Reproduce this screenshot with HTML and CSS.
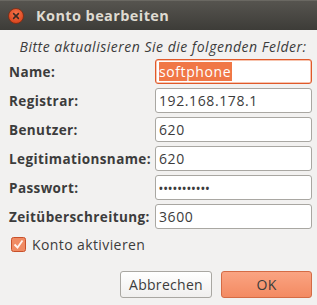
FILE: index.html
```html
<!DOCTYPE html>
<html>
<head>
<meta charset="utf-8">
<link rel="stylesheet" href="styles.css">
</head>
<body>
<div class="window">
  <div class="titlebar">
    <span class="close"><svg width="16" height="16" viewBox="0 0 16 16"><defs><radialGradient id="g" cx="50%" cy="35%" r="65%"><stop offset="0" stop-color="#f5734a"/><stop offset="1" stop-color="#d8431c"/></radialGradient></defs><circle cx="8" cy="8" r="7.5" fill="url(#g)" stroke="#7a2a12" stroke-width="0.8"/><path d="M5.6 5.6 L10.4 10.4 M10.4 5.6 L5.6 10.4" stroke="#3a2a24" stroke-width="1.5" stroke-linecap="round"/></svg></span>
    <span class="title">Konto bearbeiten</span>
  </div>
  <div class="content">
    <p class="intro">Bitte aktualisieren Sie die folgenden Felder:</p>
    <div class="form">
      <label class="lbl">Name:</label>
      <div class="field focus"><span class="sel">softphone</span></div>
      <label class="lbl">Registrar:</label>
      <div class="field">192.168.178.1</div>
      <label class="lbl">Benutzer:</label>
      <div class="field">620</div>
      <label class="lbl">Legitimationsname:</label>
      <div class="field">620</div>
      <label class="lbl">Passwort:</label>
      <div class="field pw">•••••••••••</div>
      <label class="lbl">Zeitüberschreitung:</label>
      <div class="field">3600</div>
    </div>
    <div class="check">
      <svg width="15" height="15" viewBox="0 0 15 15"><rect x="0.5" y="0.5" width="14" height="14" rx="2" fill="#f08b63" stroke="#c8502a"/><path d="M3.5 7.5 L6.5 10.5 L11.5 3.5" fill="none" stroke="#fff3ee" stroke-width="1.8"/></svg>
      <span>Konto aktivieren</span>
    </div>
    <div class="buttons">
      <button class="btn">Abbrechen</button>
      <button class="btn ok">OK</button>
    </div>
  </div>
</div>
</body>
</html>
```
FILE: styles.css
```css
* { box-sizing: border-box; }
html, body { margin: 0; padding: 0; }
body {
  width: 317px;
  height: 305px;
  background: #f2f1f0;
  font-family: "Open Sans", "DejaVu Sans", sans-serif;
  color: #3c3c3c;
  overflow: hidden;
}
.window { width: 317px; height: 305px; display: flex; flex-direction: column; }
.titlebar {
  height: 30px;
  background: linear-gradient(#56544f, #3d3c38);
  border-top: 1px solid #6a6862;
  display: flex;
  align-items: center;
  padding-left: 8px;
}
.close { width: 16px; height: 16px; display: flex; }
.title {
  margin-left: 12px;
  color: #dfdbd2;
  font-weight: bold;
  font-size: 14.5px;
  letter-spacing: 0.4px;
}
.content { padding: 0 5px 0 8px; flex: 1; display: flex; flex-direction: column; }
.intro {
  margin: 8px 0 0 0;
  height: 17px;
  text-align: center;
  font-style: italic;
  font-size: 14px;
  letter-spacing: 0.5px;
  line-height: 17px;
  padding-left: 6px;
  white-space: nowrap;
}
.form {
  margin-top: 4px;
  display: grid;
  grid-template-columns: 147px 157px;
  grid-auto-rows: 25px;
  row-gap: 4px;
}
.lbl {
  font-weight: bold;
  font-size: 13.5px;
  letter-spacing: 0.4px;
  display: flex;
  align-items: center;
  padding-left: 1px;
  white-space: nowrap;
}
.field {
  background: #fff;
  border: 1px solid #a9a7a2;
  border-radius: 3px;
  font-size: 14px;
  letter-spacing: 0.6px;
  display: flex;
  align-items: center;
  padding-left: 3px;
}
.field.focus { border-color: #e0592a; box-shadow: inset 0 0 0 0.5px #f08a60; }
.sel {
  background: #f07746;
  color: #fff;
  line-height: 19px;
  padding: 0 1px 0 0;
}
.pw { font-size: 10px; letter-spacing: 0.9px; font-weight: bold; }
.check {
  margin-top: 7px;
  display: flex;
  align-items: center;
  padding-left: 3px;
  font-size: 14px;
  letter-spacing: 0.4px;
  height: 16px;
}
.check span { margin-left: 6px; }
.buttons {
  margin-top: auto;
  margin-bottom: 7px;
  display: flex;
  justify-content: flex-end;
  gap: 9px;
}
.btn {
  font-family: inherit;
  font-size: 14px;
  letter-spacing: 0.3px;
  color: #3c3c3c;
  height: 27px;
  width: 92px;
  border: 1px solid #a9a7a2;
  border-radius: 3px;
  background: linear-gradient(#ffffff, #f0efee);
  padding: 0;
}
.btn.ok {
  width: 91px;
  background: linear-gradient(#faa482, #f38a62);
  border-color: #d46b45;
}
```
